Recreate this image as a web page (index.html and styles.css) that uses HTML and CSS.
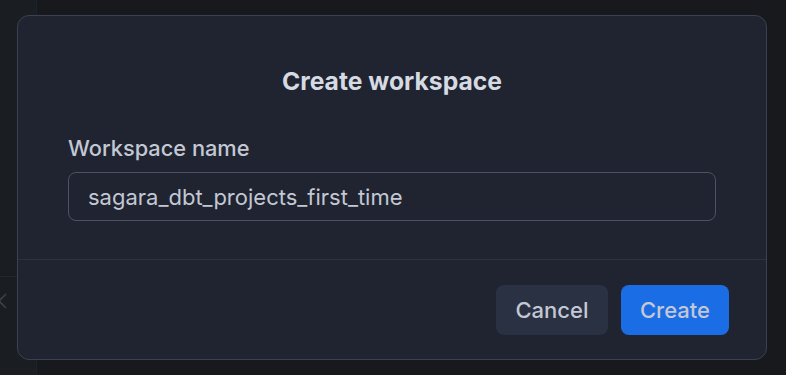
FILE: index.html
```html
<!DOCTYPE html>
<html lang="en">

<head>
    <meta charset="UTF-8">
    <meta name="viewport" content="width=device-width, initial-scale=1.0">
    <title>Create workspace</title>
    <link rel="stylesheet" href="styles.css">
</head>

<body>
    <div class="backdrop">
        <div class="side">
            <div class="side-row">
                <svg class="side-close" width="16" height="16" viewBox="0 0 16 16">
                    <path d="M1 1 L15 15 M15 1 L1 15" stroke="#3b404a" stroke-width="1.6" fill="none" />
                </svg>
            </div>
        </div>
    </div>

    <div class="modal">
        <div class="modal-body">
            <h2>Create workspace</h2>
            <label for="workspaceName">Workspace name</label>
            <input type="text" id="workspaceName" value="sagara_dbt_projects_first_time">
        </div>
        <div class="modal-footer">
            <button class="btn cancel">Cancel</button>
            <button class="btn create">Create</button>
        </div>
    </div>
</body>

</html>
```

FILE: styles.css
```css
body {
    font-family: Inter, "Noto Sans", sans-serif;
    margin: 0;
    padding: 0;
    width: 786px;
    height: 375px;
    overflow: hidden;
    background-color: #17191d;
    position: relative;
}

.backdrop {
    display: flex;
    height: 100%;
}

.side {
    width: 36px;
    border-right: 1px solid #1f2228;
    background-color: #1a1d22;
    padding-top: 276px;
}

.side-row {
    border-top: 1px solid #23262d;
    height: 48px;
    display: flex;
    align-items: center;
}

.side-close {
    margin-left: -9px;
}

.modal {
    position: absolute;
    left: 17px;
    top: 15px;
    width: 748px;
    background-color: #1f2430;
    border: 1px solid #3a4152;
    border-radius: 12px;
}

.modal-body {
    padding: 50px 50px 38px;
    display: flex;
    flex-direction: column;
}

h2 {
    margin: 0 0 40px;
    text-align: center;
    font-size: 24.7px;
    line-height: 30px;
    font-weight: 700;
    color: #d6dae3;
}

label {
    font-size: 21.8px;
    line-height: 24px;
    font-weight: 500;
    color: #c3c8d4;
    margin-bottom: 12px;
}

input {
    height: 49px;
    box-sizing: border-box;
    border: 1px solid #4a5265;
    border-radius: 8px;
    background-color: #1f2430;
    color: #c3c8d4;
    font-family: inherit;
    font-size: 22px;
    padding: 0 19px;
    outline: none;
}

.modal-footer {
    border-top: 1px solid #2c3240;
    padding: 25px 37px 24px;
    display: flex;
    justify-content: flex-end;
    gap: 13px;
}

.btn {
    height: 50px;
    border: none;
    border-radius: 8px;
    font-family: inherit;
    font-size: 22px;
    font-weight: 500;
    color: #c3c8d4;
    cursor: pointer;
}

.cancel {
    width: 112px;
    background-color: #2a3143;
}

.create {
    width: 108px;
    background-color: #1b6de6;
}
```
